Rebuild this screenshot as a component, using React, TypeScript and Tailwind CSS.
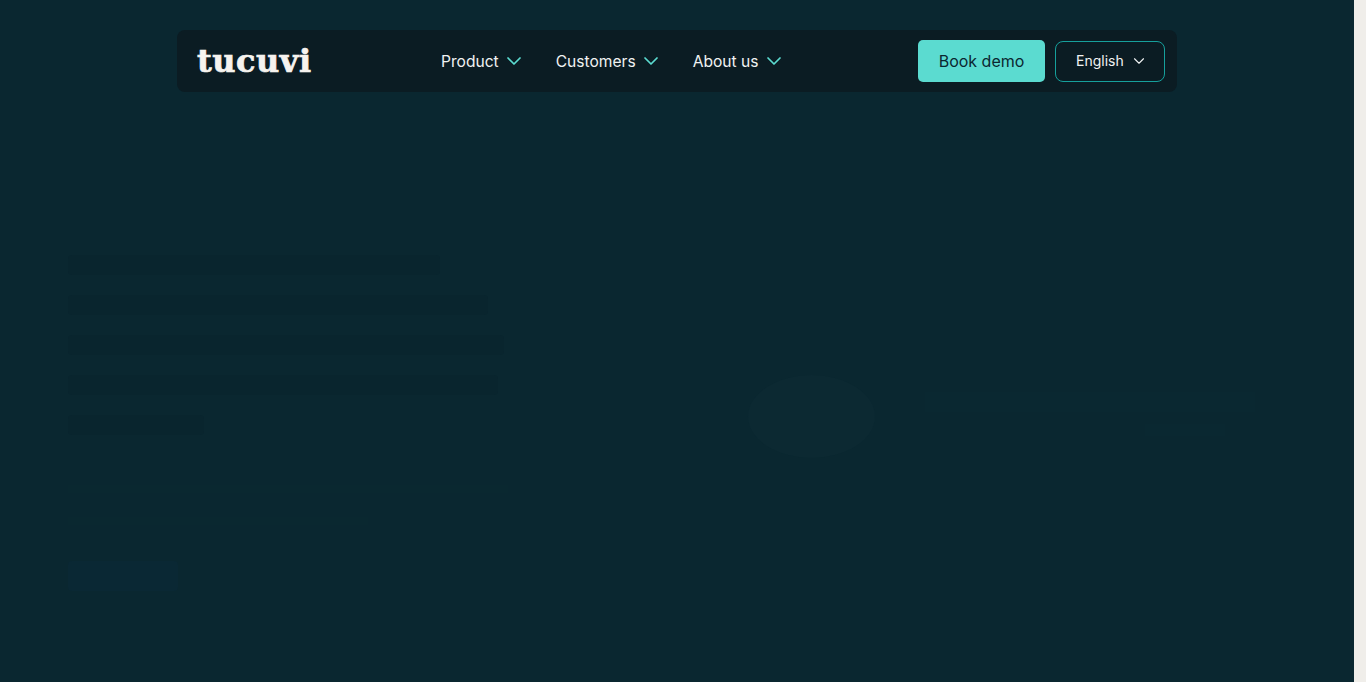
import React from 'react';
import { ChevronDown } from 'lucide-react';

const navItems = ['Product', 'Customers', 'About us'];

// hero content is still faded in on the reference, only its shape can be made out
const headingLines = ['w-[372px]', 'w-[420px]', 'w-[436px]', 'w-[430px]', 'w-[136px]'];

const App: React.FC = () => {
  return (
    <div className="flex h-[682px] overflow-hidden bg-[#f0eeea] font-['Inter',sans-serif]">
      <div className="w-[1354px] h-full bg-[#0a2730] flex flex-col">
        <header className="w-[1000px] h-[62px] mx-auto mt-[30px] shrink-0 flex items-center pl-5 pr-3 bg-[#0b1c23] rounded-lg">
          <span className="w-[244px] text-[32px] leading-none font-bold tracking-[0.5px] text-[#f6f3ef] font-['DejaVu_Serif',serif] [-webkit-text-stroke:0.7px_#f6f3ef]">
            tucuvi
          </span>
          <nav className="flex items-center gap-[30px]">
            {navItems.map(item => (
              <a key={item} className="flex items-center gap-[3px] text-[15.6px] text-[#f0f2f2]">
                <span className="pt-0.5">{item}</span>
                <ChevronDown size={24} strokeWidth={1.75} className="text-[#5bdbd0]" />
              </a>
            ))}
          </nav>
          <button className="ml-auto w-[127px] h-[42px] rounded-[5px] bg-[#5bdbd0] text-base text-[#0b2730]">
            Book demo
          </button>
          <button className="ml-2.5 w-[110px] h-[41px] flex items-center pl-5 gap-1.5 rounded-lg border border-[#16a09c] text-sm text-[#f0f2f2]">
            English
            <ChevronDown size={18} strokeWidth={1.5} />
          </button>
        </header>

        <main className="flex pt-[163px]">
          <div className="w-[680px] pl-[68px] shrink-0">
            <div className="flex flex-col gap-5">
              {headingLines.map(w => (
                <div key={w} className={`${w} h-5 rounded-sm bg-[#09252e]`} />
              ))}
            </div>
            <div className="mt-[50px] flex flex-col gap-6">
              <div className="w-[440px] h-2 bg-[#0a2830]" />
              <div className="w-[300px] h-2 bg-[#0a2830]" />
            </div>
            <div className="mt-[36px] w-[110px] h-[30px] rounded-sm bg-[#0a2834]" />
          </div>
          <div className="flex items-start pt-[120px] pl-[68px]">
            <div className="w-[127px] h-[83px] rounded-[50%] bg-[#0c2932] shrink-0" />
            <div className="ml-[50px] pt-[17px] flex flex-col gap-3">
              <div className="w-[330px] h-5 bg-[#0a2831]" />
              <div className="ml-[220px] w-[80px] h-3 bg-[#0a2831]" />
            </div>
          </div>
        </main>
      </div>
    </div>
  );
};

export default App;
